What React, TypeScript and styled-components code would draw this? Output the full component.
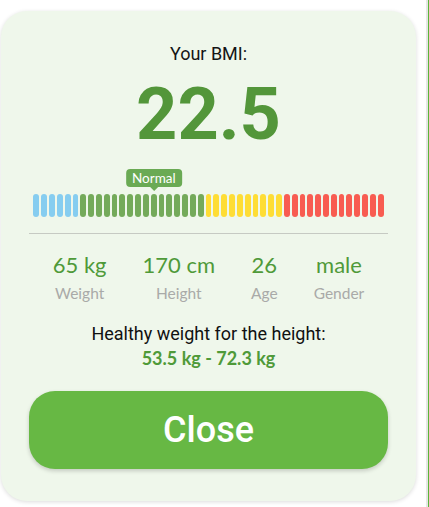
import styled, { createGlobalStyle } from "styled-components";

const GlobalStyle = createGlobalStyle`
  html, body {
    margin: 0;
    padding: 0;
    background: #ffffff;
  }
`;

const Page = styled.div`
  box-sizing: border-box;
  width: 429px;
  min-height: 507px;
  padding: 11px 0 0 1px;
  border-right: 1px solid #5ab53a;
  box-shadow: inset -2px 0 0 #e6e7e5;
`;

const Card = styled.div`
  box-sizing: border-box;
  width: 415px;
  height: 490px;
  padding: 32px 28px 0;
  border-radius: 26px;
  background: #eff7eb;
  box-shadow: 0 1px 4px rgba(0, 0, 0, 0.14);
  display: flex;
  flex-direction: column;
  align-items: center;
`;

const Title = styled.div`
  font-family: Roboto, "Liberation Sans", sans-serif;
  font-size: 18px;
  line-height: 22px;
  color: #151515;
`;

const Score = styled.div`
  margin-top: 13.5px;
  font-family: Roboto, "Liberation Sans", sans-serif;
  font-size: 72px;
  font-weight: 700;
  line-height: 72px;
  color: #53963a;
`;

const Meter = styled.div`
  position: relative;
  margin-top: 18.5px;
  padding-top: 25px;
  display: flex;
  gap: 2px;
`;

const Bar = styled.div<{ $color: string }>`
  width: 5.84px;
  height: 23px;
  border-radius: 3px;
  background: ${(p) => p.$color};
`;

const Marker = styled.div`
  position: absolute;
  top: 0;
  transform: translateX(-50%);
  padding: 0 6px;
  height: 18px;
  border-radius: 4px;
  background: #6aaa54;
  color: #ffffff;
  font-family: Lato, "Liberation Sans", sans-serif;
  font-size: 13.5px;
  line-height: 18px;
  white-space: nowrap;

  &::after {
    content: "";
    position: absolute;
    left: 50%;
    bottom: -4px;
    margin-left: -4px;
    border-left: 4px solid transparent;
    border-right: 4px solid transparent;
    border-top: 4px solid #6aaa54;
  }
`;

const Divider = styled.div`
  align-self: stretch;
  margin-top: 16px;
  height: 1px;
  background: #c6cac3;
`;

const Stats = styled.div`
  margin-top: 18px;
  display: flex;
  justify-content: center;
  gap: 36px;
`;

const Stat = styled.div`
  display: flex;
  flex-direction: column;
  align-items: center;
  gap: 6px;
  font-family: Lato, "Liberation Sans", sans-serif;
`;

const StatValue = styled.div`
  font-size: 22px;
  line-height: 26px;
  color: #4f9a39;
`;

const StatLabel = styled.div`
  font-size: 15.5px;
  line-height: 18px;
  color: #a9aaa8;
`;

const HealthyTitle = styled.div`
  margin-top: 20.5px;
  font-family: Roboto, "Liberation Sans", sans-serif;
  font-size: 18px;
  line-height: 22px;
  color: #111111;
`;

const HealthyRange = styled.div`
  margin-top: 2.5px;
  font-family: Lato, "Liberation Sans", sans-serif;
  font-size: 18px;
  font-weight: 700;
  line-height: 22px;
  color: #4f9a39;
`;

const CloseButton = styled.button`
  align-self: stretch;
  margin-top: 22px;
  height: 78px;
  border: none;
  border-radius: 26px;
  background: #67b844;
  box-shadow: 0 2px 4px rgba(0, 0, 0, 0.18);
  color: #ffffff;
  font-family: Roboto, "Liberation Sans", sans-serif;
  font-size: 36px;
  font-weight: 500;
  cursor: pointer;
`;

const bands = [
  { color: "#86cdf0", count: 6 },
  { color: "#74aa5a", count: 16 },
  { color: "#fedd35", count: 10 },
  { color: "#f85c51", count: 13 },
];

const bars = bands.flatMap((b) => Array.from({ length: b.count }, () => b.color));

const stats = [
  { value: "65 kg", label: "Weight" },
  { value: "170 cm", label: "Height" },
  { value: "26", label: "Age" },
  { value: "male", label: "Gender" },
];

const markerIdx = 15;

const App = () => {
  const pitch = 7.84;
  const markerX = markerIdx * pitch + 2.9;

  return (
    <>
      <GlobalStyle />
      <Page>
        <Card>
          <Title>Your BMI:</Title>
          <Score>22.5</Score>
          <Meter>
            <Marker style={{ left: markerX }}>Normal</Marker>
            {bars.map((color, i) => (
              <Bar key={i} $color={color} />
            ))}
          </Meter>
          <Divider />
          <Stats>
            {stats.map((s) => (
              <Stat key={s.label}>
                <StatValue>{s.value}</StatValue>
                <StatLabel>{s.label}</StatLabel>
              </Stat>
            ))}
          </Stats>
          <HealthyTitle>Healthy weight for the height:</HealthyTitle>
          <HealthyRange>53.5 kg - 72.3 kg</HealthyRange>
          <CloseButton>Close</CloseButton>
        </Card>
      </Page>
    </>
  );
};

export default App;
